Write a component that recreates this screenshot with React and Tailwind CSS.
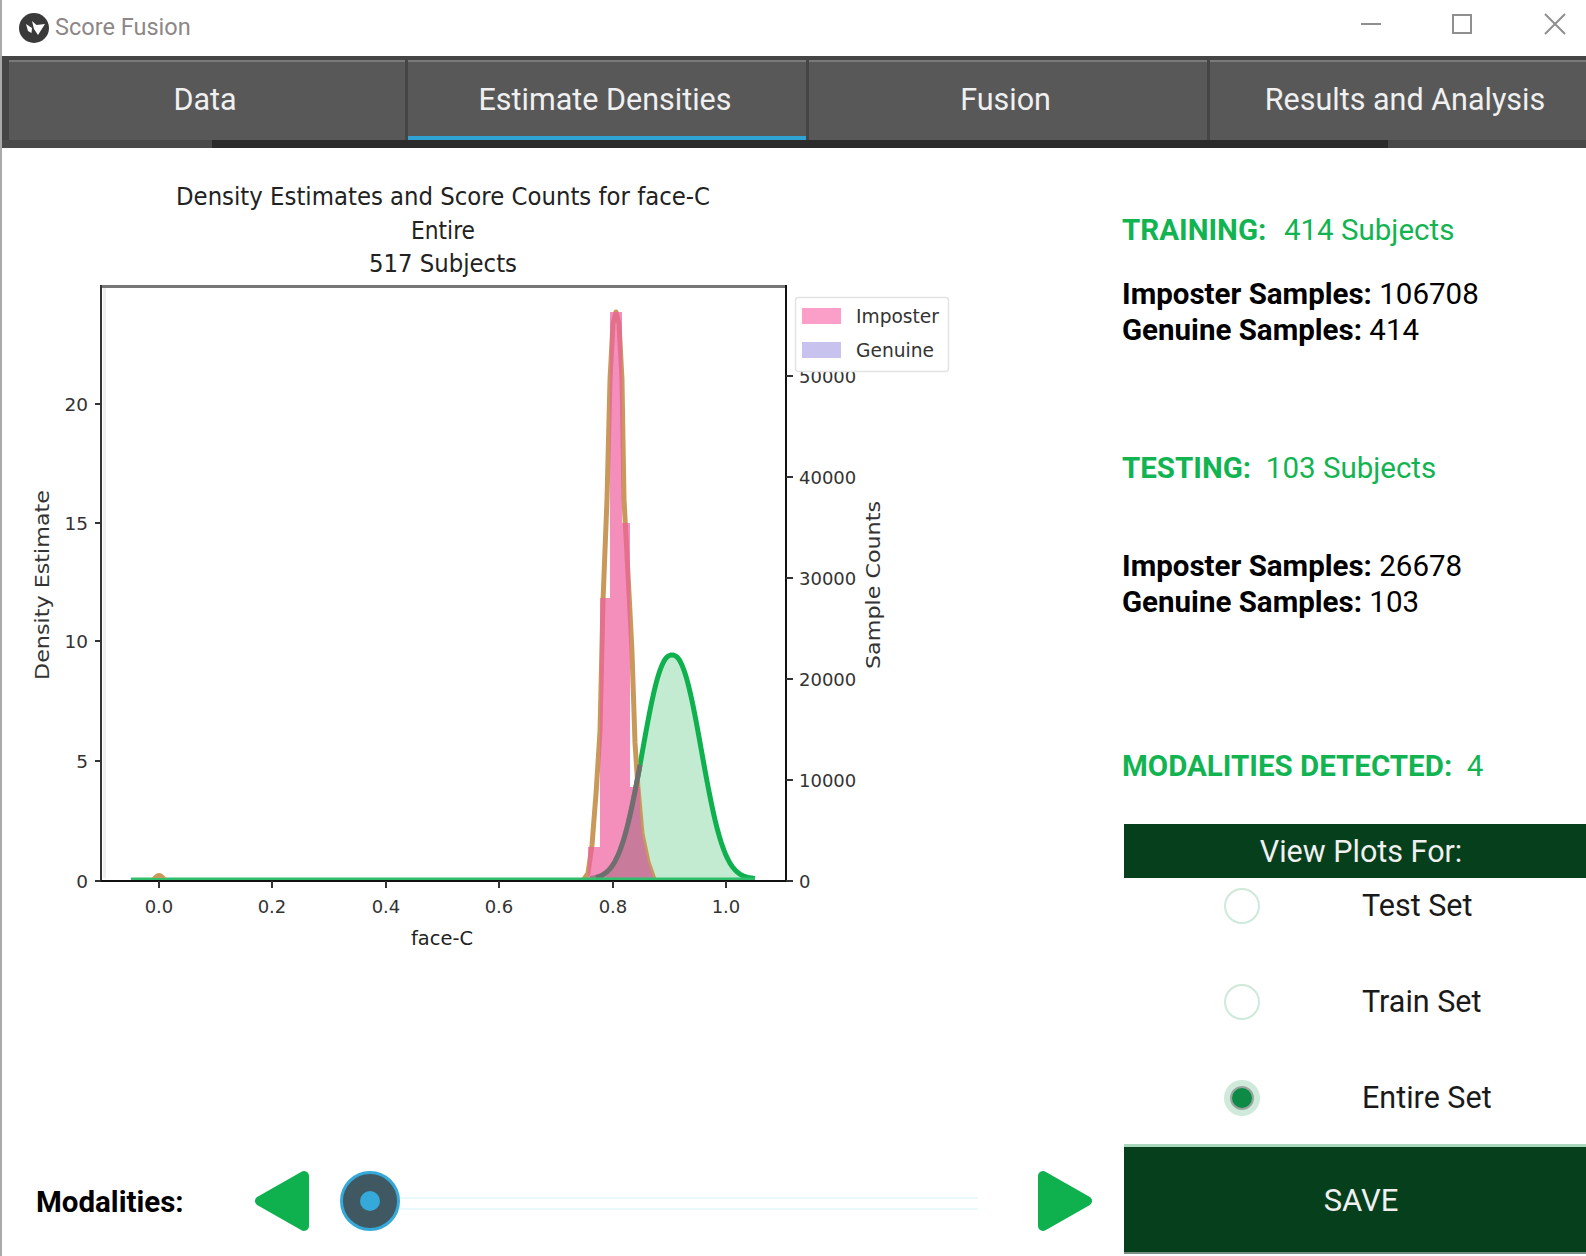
import React from 'react';

const genuine = (x) => 224 * Math.exp(-Math.pow(Math.abs(x - 672) / 38, 2.3));

// imposter KDE read off the plot: [x, fraction of peak]
const imposterShape = [
  [584, 0], [588, 0.01], [592, 0.06], [596, 0.15], [600, 0.26], [603, 0.49], [607, 0.67], [610, 0.88], [613, 0.98], [616, 1],
  [619, 0.98], [622, 0.88], [624, 0.67], [630, 0.47], [632, 0.4], [635, 0.24], [638, 0.16], [642, 0.08], [648, 0.03], [654, 0],
];
const imposter = (x) => {
  for (let i = 1; i < imposterShape.length; i++) {
    const [x0, y0] = imposterShape[i - 1];
    const [x1, y1] = imposterShape[i];
    if (x <= x1) return 567 * (y0 + ((y1 - y0) * (x - x0)) / (x1 - x0));
  }
  return 0;
};

const range = (from, to, step = 1) => {
  const out = [];
  for (let x = from; x <= to; x += step) out.push(x);
  return out;
};
const toPath = (xs, fn) => xs.map((x, i) => `${i ? 'L' : 'M'}${x} ${(879 - fn(x)).toFixed(1)}`).join(' ');

const bars = [
  [588, 600, 847],
  [600, 610, 598],
  [610, 622, 312],
  [622, 630, 523],
  [630, 640, 787],
  [640, 650, 868],
];

const leftTicks = [['0', 881], ['5', 761], ['10', 641], ['15', 523], ['20', 404]];
const rightTicks = [['0', 881], ['10000', 780], ['20000', 679], ['30000', 578], ['40000', 477], ['50000', 376]];
const bottomTicks = [['0.0', 159], ['0.2', 272], ['0.4', 386], ['0.6', 499], ['0.8', 613], ['1.0', 726]];

function Chart() {
  const gXs = range(590, 755);
  const overlapXs = range(606, 654);
  const overlap = (x) => Math.min(genuine(x), imposter(x));
  return (
    <svg viewBox="2 148 1120 830" className="block w-[1120px] h-[830px]" fontFamily="'DejaVu Sans', sans-serif" fill="#222">
      <text x="443" y="205" fontSize="25" textAnchor="middle" textLength="534" lengthAdjust="spacingAndGlyphs">Density Estimates and Score Counts for face-C</text>
      <text x="443" y="239" fontSize="25" textAnchor="middle" textLength="64" lengthAdjust="spacingAndGlyphs">Entire</text>
      <text x="443" y="272" fontSize="25" textAnchor="middle" textLength="148" lengthAdjust="spacingAndGlyphs">517 Subjects</text>

      {/* density curves and histogram */}
      <path d={`${toPath(gXs, genuine)} L755 881 L590 881 Z`} fill="#c3ebd1" />
      <path d={toPath(gXs, genuine)} fill="none" stroke="#0fb04e" strokeWidth="5" />
      <path d={toPath(range(584, 654), imposter)} fill="none" stroke="#c9995c" strokeWidth="5" strokeLinejoin="round" />
      {bars.map(([x1, x2, top]) => (
        <rect key={x1} x={x1} y={top} width={x2 - x1} height={881 - top} fill="#f0609f" fillOpacity="0.7" />
      ))}
      <path d={`${toPath(overlapXs, overlap)} L654 881 L606 881 Z`} fill="#c97b9c" />
      <path d={toPath(range(596, 640), genuine)} fill="none" stroke="#6f6f6f" strokeWidth="5" />
      <line x1="131" y1="879" x2="755" y2="879" stroke="#2fbf6a" strokeWidth="3" />
      <path d="M152 878 Q159 868 166 878 Z" fill="#c9995c" />

      {/* axes */}
      <rect x="103" y="288" width="3" height="590" fill="#efefef" />
      <line x1="100" y1="286.5" x2="787" y2="286.5" stroke="#777" strokeWidth="3" />
      <line x1="101" y1="285" x2="101" y2="882" stroke="#333" strokeWidth="2" />
      <line x1="786" y1="285" x2="786" y2="882" stroke="#111" strokeWidth="2" />
      <line x1="95" y1="881" x2="793" y2="881" stroke="#111" strokeWidth="2" />

      {leftTicks.map(([label, y]) => (
        <g key={label}>
          <line x1="95" y1={y} x2="101" y2={y} stroke="#333" strokeWidth="2" />
          <text x="88" y={y + 7} fontSize="18.5" textAnchor="end" fill="#333">{label}</text>
        </g>
      ))}
      {rightTicks.map(([label, y]) => (
        <g key={label}>
          <line x1="786" y1={y} x2="793" y2={y} stroke="#333" strokeWidth="2" />
          <text x="799" y={y + 7} fontSize="18" fill="#333">{label}</text>
        </g>
      ))}
      {bottomTicks.map(([label, x]) => (
        <g key={label}>
          <line x1={x} y1="881" x2={x} y2="888" stroke="#333" strokeWidth="2" />
          <text x={x} y="913" fontSize="18" textAnchor="middle" fill="#333">{label}</text>
        </g>
      ))}

      <text x="442" y="945" fontSize="20" textAnchor="middle" textLength="62" lengthAdjust="spacingAndGlyphs">face-C</text>
      <text transform="translate(49 585) rotate(-90)" fontSize="19" textAnchor="middle" textLength="190" lengthAdjust="spacingAndGlyphs" fill="#333">Density Estimate</text>
      <text transform="translate(880 585) rotate(-90)" fontSize="19" textAnchor="middle" textLength="168" lengthAdjust="spacingAndGlyphs" fill="#333">Sample Counts</text>

      {/* legend */}
      <rect x="795.5" y="297.5" width="153" height="74" rx="3" fill="#fff" stroke="#e3e3e3" strokeWidth="1.5" />
      <rect x="802" y="308" width="39" height="16" fill="#fb9fc8" />
      <rect x="802" y="342" width="39" height="16" fill="#c8c2ee" />
      <text x="856" y="323" fontSize="20" textLength="83" lengthAdjust="spacingAndGlyphs" fill="#333">Imposter</text>
      <text x="856" y="357" fontSize="20" textLength="78" lengthAdjust="spacingAndGlyphs" fill="#333">Genuine</text>
    </svg>
  );
}

function KivyLogo() {
  return (
    <svg viewBox="0 0 30 30" className="w-[30px] h-[30px] shrink-0">
      <circle cx="15" cy="15" r="15" fill="#3a3a3a" />
      <path d="M7 11 L13 15 L12.5 20 L9 18 Z" fill="#fff" />
      <path d="M13 8 L17.5 12 L26 11 L19 22 L15 16 Z" fill="#fff" />
    </svg>
  );
}

function TitleBar() {
  return (
    <div className="h-[56px] -ml-[2px] flex items-center bg-white border-l-2 border-black pl-[17px]">
      <KivyLogo />
      <span className="ml-[6px] text-[23.5px] text-[#8d8787]">Score Fusion</span>
      <div className="ml-auto mr-[10px]">
        <svg width="220" height="56" viewBox="0 0 220 56" className="block" fill="none" stroke="#8f8f8f" strokeWidth="2">
          <line x1="5" y1="24" x2="25" y2="24" />
          <rect x="97" y="15" width="18" height="18" />
          <path d="M189 14 L209 34 M209 14 L189 34" />
        </svg>
      </div>
    </div>
  );
}

function Tab({ label, active, className }) {
  return (
    <div className={`h-[80px] flex items-center justify-center bg-[#585858] border-t-2 border-[#7a7a7a] text-[30.5px] text-[#f0f0f0] ${active ? 'border-b-4 border-b-[#2fa4d4] pt-[2px]' : 'pb-[2px]'} ${className}`}>
      {label}
    </div>
  );
}

function TabBar() {
  return (
    <div className="h-[92px] bg-[#454545]">
      <div className="flex gap-[3px] pt-[4px] pl-[7px]">
        <Tab label="Data" className="w-[396px] pr-[4px]" />
        <Tab label="Estimate Densities" active className="w-[398px] pr-[4px]" />
        <Tab label="Fusion" className="w-[398px] pr-[5px]" />
        <Tab label="Results and Analysis" className="flex-1 pl-[14px]" />
      </div>
      <div className="flex h-[8px]">
        <div className="w-[210px] bg-[#4a4a4a]" />
        <div className="w-[1176px] bg-[#2b2b2b]" />
        <div className="flex-1 bg-[#484848]" />
      </div>
    </div>
  );
}

function Modalities() {
  return (
    <div className="flex items-center h-[62px] mb-[24px] pl-[34px]">
      <span className="w-[218px] pt-[2px] text-[29.5px] font-bold text-black">Modalities:</span>
      <svg width="57" height="62" viewBox="0 0 57 62" className="shrink-0">
        <path d="M50 6 L50 56 L6 31 Z" fill="#0fb04e" stroke="#0fb04e" strokeWidth="10" strokeLinejoin="round" />
      </svg>
      <div className="relative ml-[29px] w-[638px] h-[62px] shrink-0">
        <div className="absolute left-[59px] right-0 top-[27px] h-[13px] border-y-2 border-[#eaf7fc]" />
        <div className="absolute left-0 top-[1px] w-[60px] h-[60px] rounded-full bg-[#3f5862] border-[3px] border-[#35a9d9] flex items-center justify-center">
          <div className="w-[20px] h-[20px] rounded-full bg-[#35a9d9]" />
        </div>
      </div>
      <svg width="57" height="62" viewBox="0 0 57 62" className="shrink-0 ml-[59px]">
        <path d="M6 6 L6 56 L50 31 Z" fill="#0fb04e" stroke="#0fb04e" strokeWidth="10" strokeLinejoin="round" />
      </svg>
    </div>
  );
}

function SampleCounts({ imposter, genuine, className }) {
  return (
    <div className={`-ml-[2px] text-[29.5px] leading-[36px] text-black ${className}`}>
      <div><b className="font-bold">Imposter Samples:</b> {imposter}</div>
      <div><b className="font-bold">Genuine Samples:</b> {genuine}</div>
    </div>
  );
}

function Radio({ label, checked }) {
  return (
    <div className="h-[56px] flex items-center pl-[100px]">
      {checked ? (
        <div className="w-[36px] h-[36px] rounded-full bg-[#cfe9da] flex items-center justify-center">
          <div className="w-[24px] h-[24px] rounded-full bg-[#0d8a46] border-2 border-[#9aa59f]" />
        </div>
      ) : (
        <div className="w-[36px] h-[36px] rounded-full border-2 border-[#cfe9da]" />
      )}
      <span className="ml-[102px] text-[30.5px] text-[#1a1a1a]">{label}</span>
    </div>
  );
}

function SidePanel() {
  return (
    <div className="w-[464px] pt-[64px] pl-[2px] shrink-0 overflow-hidden">
      <div className="-ml-[2px] text-[29.5px] leading-[36px] text-[#12b452]">
        <b className="font-bold">TRAINING:</b>&nbsp; <span className="ml-[3px]">414 Subjects</span>
      </div>
      <SampleCounts imposter="106708" genuine="414" className="mt-[28px]" />
      <div className="-ml-[2px] mt-[102px] text-[29.5px] leading-[36px] text-[#12b452]">
        <b className="font-bold">TESTING:</b>&nbsp; 103 Subjects
      </div>
      <SampleCounts imposter="26678" genuine="103" className="mt-[62px]" />
      <div className="-ml-[2px] mt-[128px] text-[29.5px] leading-[36px] text-[#12b452]">
        <b className="font-bold">MODALITIES DETECTED:</b>&nbsp; 4
      </div>
      <div className="mt-[40px] h-[54px] bg-[#063f1c] flex items-center justify-center pl-[12px] pt-[1px] text-[30.5px] text-[#f0f0f0]">
        View Plots For:
      </div>
      <div className="flex flex-col gap-[40px]">
        <Radio label="Test Set" />
        <Radio label="Train Set" />
        <Radio label="Entire Set" checked />
      </div>
      <div className="mt-[18px] h-[110px] bg-[#063f1c] border-t-[3px] border-[#a9d8bd] border-b-2 border-b-[#7d8f84] flex items-center justify-center pl-[12px] pt-[4px] text-[31px] text-[#f0f0f0]">
        SAVE
      </div>
    </div>
  );
}

export default function App() {
  return (
    <div className="w-[1586px] h-[1256px] overflow-hidden bg-white border-l-2 border-[#aaaaaa] font-['Roboto',sans-serif]">
      <TitleBar />
      <TabBar />
      <div className="flex h-[1108px]">
        <div className="w-[1120px] shrink-0 flex flex-col justify-between">
          <Chart />
          <Modalities />
        </div>
        <SidePanel />
      </div>
    </div>
  );
}
